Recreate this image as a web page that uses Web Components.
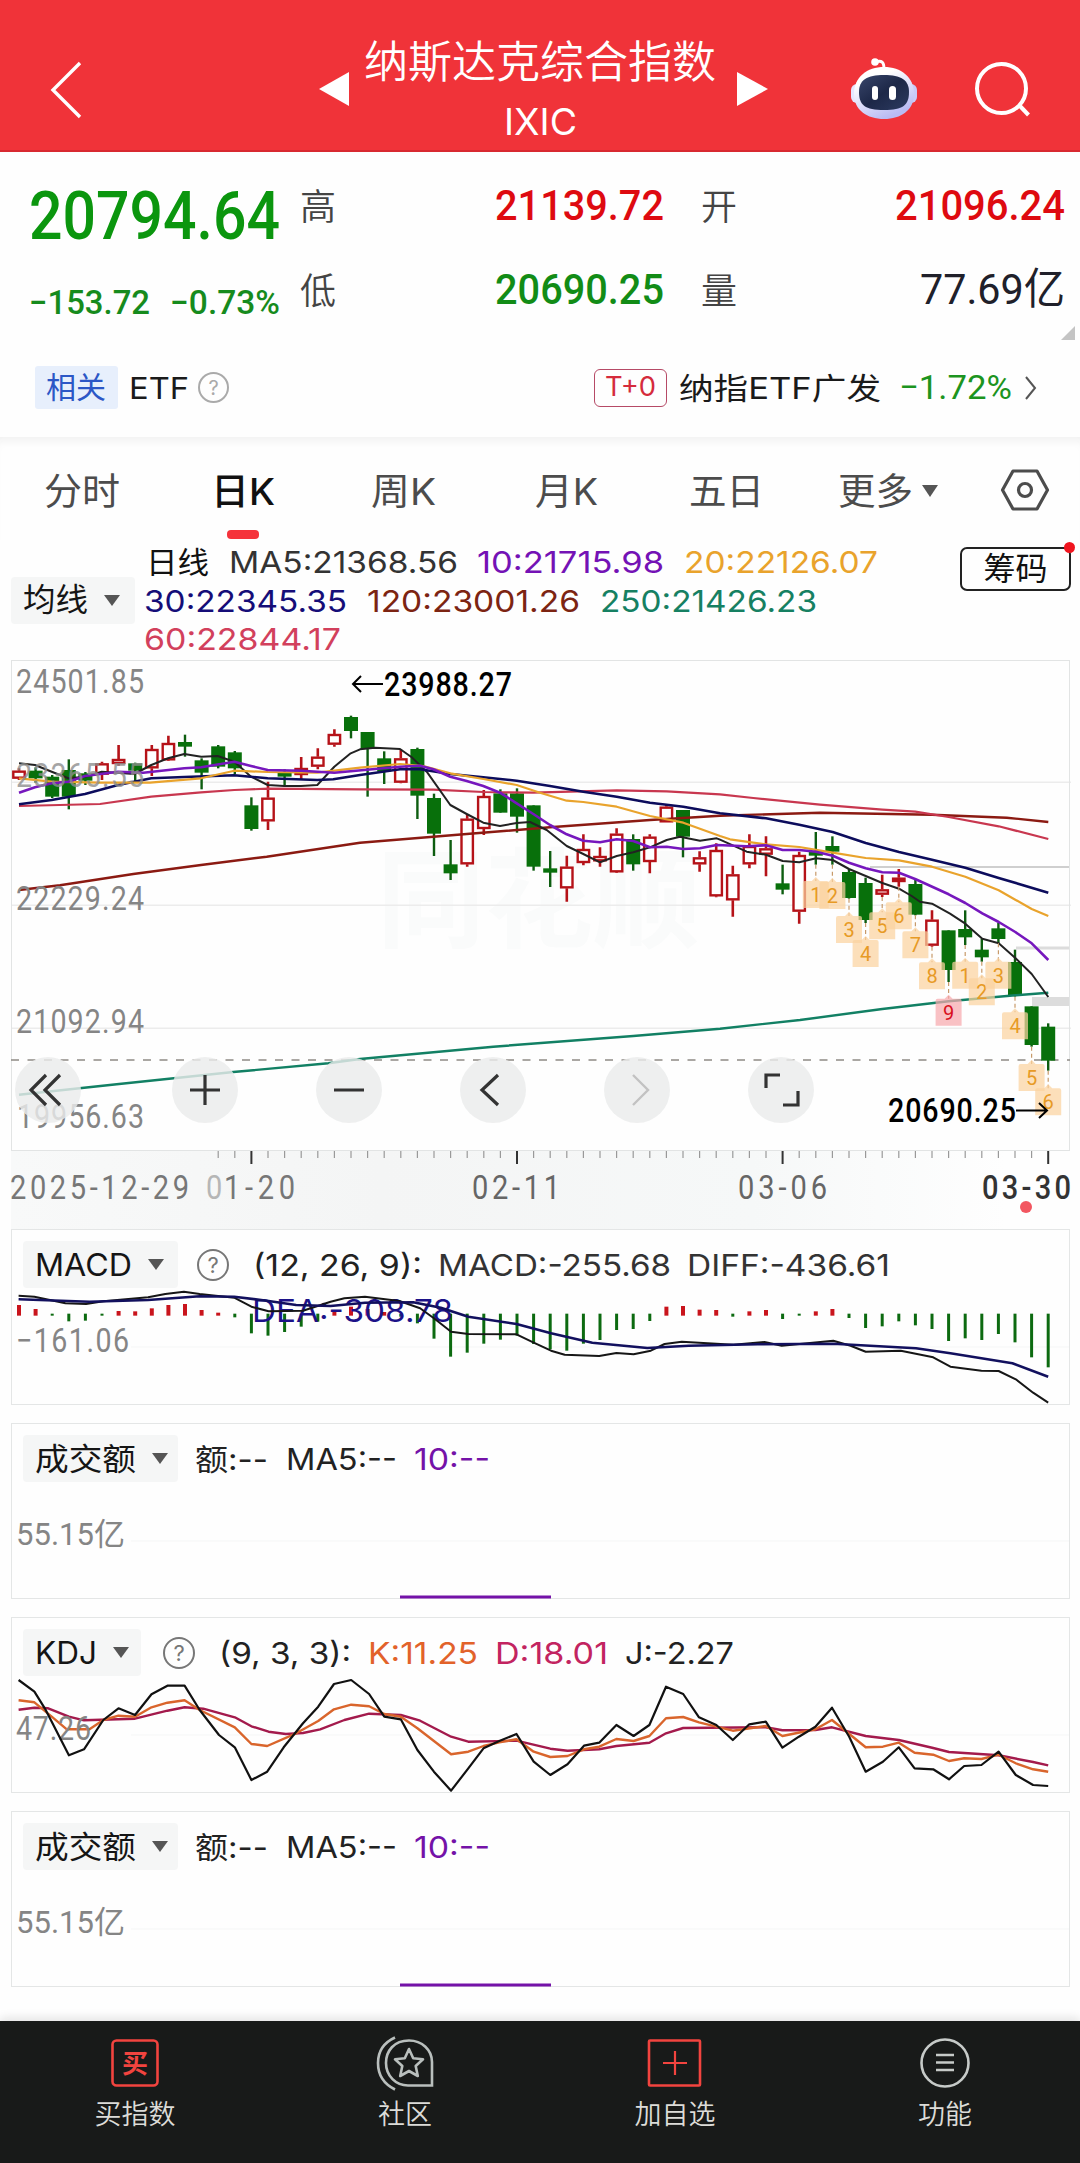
<!DOCTYPE html>
<html lang="zh-CN">
<head>
<meta charset="utf-8">
<title>纳斯达克综合指数</title>
<style>
    body {
        margin: 0;
        width: 1080px;
        height: 2163px;
        overflow: hidden;
        background: #fefefe;
        font-family: Inter, "Noto Sans CJK SC", sans-serif;
    }
</style>
</head>
<body>
<stock-page></stock-page>

<script>
const STEP = 16.6;
const FIRST_X = 8;
const FONT = 'Inter, "Noto Sans CJK SC", sans-serif';
const DIGITS = 'Roboto, "Noto Sans CJK SC", sans-serif';

// [up, high, bodyTop, bodyBottom, low] in thirds of a pixel
const CANDLES = [
    [1,355,362,386,390],[0,352,362,385,398],[0,375,380,440,444],[0,328,360,440,478],[0,366,370,392,405],
    [1,335,340,374,390],[1,285,327,342,347],[0,338,340,362,395],[1,285,297,355,378],[1,257,279,331,333],
    [0,254,276,290,320],[0,325,331,368,418],[0,285,289,350,355],[0,303,307,355,372],[0,442,466,537,542],
    [1,395,443,514,540],[0,358,368,380,405],[1,321,354,375,390],[1,295,320,350,358],[1,238,252,284,290],
    [0,197,201,243,265],[0,246,246,297,440],[0,304,325,365,402],[1,298,325,398,400],[0,293,297,437,507],
    [0,431,444,551,618],[0,570,643,670,690],[1,492,506,643,650],[1,420,438,537,555],[0,418,430,488,488],
    [0,415,430,500,548],[0,466,466,650,662],[0,603,655,668,711],[1,617,650,715,755],[1,553,597,639,646],
    [1,592,618,634,650],[1,535,551,667,669],[0,553,567,643,662],[1,553,560,636,670],[1,465,470,517,517],
    [0,480,480,560,622],[1,604,622,643,665],[1,580,600,739,742],[1,647,673,751,800],[1,553,588,643,655],
    [1,559,595,614,679],[0,644,700,719,733],[1,605,615,785,821],[0,546,605,617,644],[0,559,588,605,644],
    [0,657,666,744,746],[0,683,699,810,819],[1,674,718,734,741],[1,657,683,696,710],[0,690,702,794,796],
    [1,781,809,887,890],[0,841,841,960,996],[0,781,837,862,885],[0,866,899,922,935],[0,819,835,867,880],
    [0,899,936,1038,1040],[0,1069,1069,1185,1190],[0,1120,1130,1232,1262]
];

const AVERAGES = [
    ['#8b1a12', 2.4, '57,720 180,706 400,672 603,645 800,620 1000,590 1080,578 1400,552 1650,532 1950,510 2160,497 2460,488 2796,494 3020,503 3145,516'],
    ['#128064', 2.4, '57,1334 350,1303 700,1266 985,1240 1080,1227 1480,1190 1900,1158 2160,1136 2400,1110 2647,1077 2846,1054 3046,1036 3145,1028'],
    ['#c8374f', 2.2, '57,468 300,462 454,440 603,427 703,420 803,416 1080,418 1300,419 1450,426 1600,428 1850,421 2000,424 2160,433 2260,444 2460,464 2647,479 2746,485 2846,501 2996,529 3145,567'],
    ['#222', 2, '57,340 105,345 155,365 205,385 255,380 305,365 403,372 454,345 504,325 553,312 604,320 653,318 703,335 720,350 753,380 803,405 852,408 903,408 952,405 1003,350 1052,310 1080,298 1125,293 1200,297 1235,322 1280,365 1351,465 1400,492 1450,518 1500,528 1550,519 1590,516 1640,540 1700,588 1750,612 1800,637 1850,618 1900,607 1950,592 2000,570 2040,560 2100,572 2150,565 2160,569 2240,605 2298,614 2348,633 2398,637 2448,625 2498,630 2547,657 2597,678 2647,699 2697,716 2735,738 2760,755 2796,761 2850,791 2896,821 2947,866 2996,880 3046,924 3095,972 3145,1041'],
    ['#0c0c5c', 2.6, '57,463 155,450 255,432 354,405 454,385 553,381 703,376 803,385 952,390 1000,388 1080,375 1200,358 1260,358 1351,372 1450,382 1550,392 1650,408 1750,425 1850,440 1950,458 2050,470 2160,490 2298,505 2398,524 2498,546 2597,579 2697,606 2796,629 2896,653 2996,684 3145,728'],
    ['#e9a32c', 2.2, '57,385 155,395 300,398 450,398 603,385 703,362 803,366 952,368 1080,353 1200,342 1270,348 1351,370 1450,387 1550,405 1620,428 1700,452 1750,456 1850,470 1950,498 2050,518 2160,558 2190,568 2298,583 2398,591 2498,608 2597,624 2697,631 2796,650 2896,680 2996,721 3046,749 3095,777 3145,798'],
    ['#7617bd', 2.6, '57,428 105,412 155,400 205,395 255,378 354,365 430,368 553,355 604,352 703,335 753,348 803,360 903,362 1003,368 1125,357 1200,350 1260,347 1300,358 1351,380 1400,393 1450,408 1500,428 1550,460 1600,492 1650,525 1700,553 1750,572 1800,577 1850,568 1900,573 1950,592 2000,590 2050,597 2100,595 2150,585 2240,589 2298,586 2348,600 2398,600 2448,605 2498,617 2547,638 2597,655 2647,667 2697,668 2747,688 2846,733 2896,759 2947,790 2996,816 3046,846 3095,880 3145,930']
];

// sequence counters under the last candles: [text, bottom of the box]
const COUNTERS = [
    [1,774],[2,777],[3,879],[4,951],[5,868],[6,838],[7,925],[8,1018],[9,1127],
    [1,1016],[2,1066],[3,1016],[4,1168],[5,1323],[6,1396]
];

const MACD_BARS = [
    495,507,-527,-544,-542,-527,513,514,505,495,492,510,518,-532,-580,-587,-576,-560,-545,
    512,500,507,516,-530,-550,-596,-650,-638,-611,-599,-587,-612,-628,-632,-611,-600,-570,-567,-543,
    500,498,509,510,-530,514,510,-537,-527,514,507,-534,-564,-559,-544,-556,-567,-603,-595,-600,-582,
    -607,-652,-682
];
const DIFF = '27,467 50,470 95,490 125,492 150,484 215,472 240,462 267,455 290,462 340,473 365,500 390,514 440,512 480,485 500,475 530,470 580,483 610,505 630,535 655,575 680,582 750,583 775,608 800,632 820,644 870,648 895,639 920,643 945,632 965,612 990,605 1065,614 1110,606 1135,617 1210,602 1235,617 1257,635 1308,632 1355,652 1380,680 1425,692 1450,693 1475,718 1500,758 1522,788';
const DEA = '27,478 130,485 215,480 290,469 340,470 390,483 430,495 480,498 530,488 600,487 640,503 680,530 750,552 800,580 860,608 940,624 1000,617 1100,613 1210,611 1330,625 1380,640 1470,670 1522,710';

const LINE_J = '27,60 50,95 65,145 100,286 122,268 150,180 172,145 196,165 220,103 243,77 268,77 290,150 318,225 341,262 365,360 388,335 412,262 440,190 462,140 485,72 510,60 536,102 558,170 582,178 606,270 630,335 655,392 680,325 702,265 725,243 750,222 775,305 799,345 824,313 848,257 870,248 895,195 920,228 943,195 967,80 992,102 1015,172 1040,195 1064,240 1088,193 1112,185 1136,263 1160,230 1184,200 1208,143 1233,230 1257,335 1282,305 1305,262 1328,325 1355,328 1378,358 1400,318 1425,315 1450,275 1475,345 1500,375 1522,378';
const LINE_K = '27,121 50,127 75,170 97,208 130,208 150,180 172,167 196,170 220,142 243,128 268,121 290,150 341,202 365,252 388,258 430,220 462,183 485,148 510,134 536,139 558,162 582,170 606,205 655,283 680,275 702,258 725,247 750,238 775,275 799,291 824,288 848,268 870,260 895,237 920,243 943,228 967,175 992,171 1015,187 1064,212 1112,198 1136,228 1184,208 1208,180 1257,262 1282,260 1305,248 1328,278 1355,284 1378,303 1400,295 1425,297 1450,284 1475,310 1500,328 1522,335';
const LINE_D = '27,149 50,143 70,145 100,170 122,181 196,176 243,152 268,142 295,146 341,172 365,199 390,215 415,222 440,219 465,208 500,180 536,161 582,165 610,182 655,230 680,245 750,242 799,266 824,272 870,268 895,258 943,248 967,220 992,204 1112,202 1136,211 1184,210 1208,202 1257,228 1305,240 1355,264 1378,276 1450,286 1500,306 1522,316';

const slotX = i => FIRST_X + i * STEP;

function polyline(points, fx, fy, color, width) {
    const pts = points.split(' ').map(p => {
        const [x, y] = p.split(',').map(Number);
        return fx(x).toFixed(1) + ',' + fy(y).toFixed(1);
    }).join(' ');
    return `<polyline points="${pts}" fill="none" stroke="${color}" stroke-width="${width}" stroke-linejoin="round"/>`;
}

function label(x, y, width, text, color = '#858585', size = 32, weight = 400) {
    return `<text x="${x}" y="${y}" textLength="${width}" lengthAdjust="spacingAndGlyphs" fill="${color}" font-size="${size}" font-weight="${weight}">${text}</text>`;
}

// Narrow digits with open spacing, as on the price and date scales
function digits(x, y, width, text, color = '#858585', weight = 400, size = 32.5) {
    const k = .88;
    return `<text transform="translate(${x} ${y}) scale(${k} 1)" textLength="${(width + 1) / k}" fill="${color}" font-size="${size}" font-weight="${weight}">${text}</text>`;
}

class BaseElement extends HTMLElement {
    constructor() {
        super();
        this.attachShadow({mode: 'open'});
    }

    connectedCallback() {
        this.shadowRoot.innerHTML = this.render();
    }
}

// Text squeezed or stretched to a given width
class FitText extends BaseElement {
    connectedCallback() {
        super.connectedCallback();
        const span = this.shadowRoot.querySelector('span');
        const width = Number(this.getAttribute('w'));
        span.style.transform = `scaleX(${width / span.getBoundingClientRect().width})`;
    }

    render() {
        return `
        <style>
            :host { display: block; flex: none; width: ${this.getAttribute('w')}px; white-space: nowrap; line-height: 1.2; }
            span { display: inline-block; transform-origin: 0 50%; }
        </style>
        <span><slot></slot></span>`;
    }
}
customElements.define('fit-text', FitText);

class HelpMark extends BaseElement {
    render() {
        return `
        <style>
            :host {
                display: flex; flex: none; align-items: center; justify-content: center; box-sizing: border-box;
                width: 32px; height: 32px; border: 2px solid #777; border-radius: 50%;
                color: #777; font: 22px/1 ${FONT};
            }
        </style>
        <slot></slot>`;
    }
}
customElements.define('help-mark', HelpMark);

class DropTag extends BaseElement {
    render() {
        return `
        <style>
            :host {
                display: flex; flex: none; align-items: center; box-sizing: border-box; height: 47px;
                gap: 16px; padding: 0 0 0 12px; background: #f5f6f6; border-radius: 4px; color: #151515;
                font-size: 31px;
            }
            i { width: 0; border: 8px solid transparent; border-top: 11px solid #555; border-bottom: 0; }
        </style>
        <slot></slot><i></i>`;
    }
}
customElements.define('drop-tag', DropTag);

class PageHeader extends BaseElement {
    render() {
        return `
        <style>
            :host {
                display: flex; height: 152px; background: #f03339; color: #fff;
                box-shadow: inset 0 -2px #d82930;
            }
            svg { flex: none; display: block; }
            .title { width: 354px; margin-left: 14px; margin-right: 1px; padding-top: 33px; display: flex; flex-direction: column; align-items: center; }
            .name { font-size: 44px; font-weight: 350; line-height: 58px; white-space: nowrap; }
            .code { font-size: 37px; font-family: ${FONT}; margin-top: 9px; }
        </style>
        <svg width="349" height="152">
            <path d="M80 63L53 90L80 117" fill="none" stroke="#fff" stroke-width="3.4"/>
            <path d="M349 72V106L319 89Z" fill="#fff"/>
        </svg>
        <div class="title">
            <div class="name">纳斯达克综合指数</div>
            <fit-text class="code" w="73">IXIC</fit-text>
        </div>
        <svg width="362" height="152" viewBox="718 0 362 152">
            <defs>
                <linearGradient id="shell" x1="0" y1="0" x2=".5" y2="1">
                    <stop offset=".3" stop-color="#fff"/><stop offset="1" stop-color="#b9bbf4"/>
                </linearGradient>
                <linearGradient id="visor" x1="0" y1="0" x2="1" y2="1">
                    <stop offset="0" stop-color="#39466b"/><stop offset=".5" stop-color="#1d2848"/><stop offset="1" stop-color="#2c3a60"/>
                </linearGradient>
            </defs>
            <path d="M737 72V106L768 89Z" fill="#fff"/>
            <path d="M875 62C882 60 884 62 884 69" fill="none" stroke="#fff" stroke-width="3"/>
            <circle cx="875" cy="62" r="3.8" fill="#fff"/>
            <rect x="851" y="84" width="12" height="19" rx="6" fill="#e6e7ff"/>
            <rect x="905" y="84" width="12" height="19" rx="6" fill="#c9cbf8"/>
            <path d="M884 67C901 67 914 77 914 94C914 110 901 119 884 119C867 119 854 110 854 94C854 77 867 67 884 67Z" fill="url(#shell)"/>
            <path d="M884 75C901 75 909 80 909 92C909 105 903 110 884 110C865 110 859 105 859 92C859 80 867 75 884 75Z" fill="url(#visor)"/>
            <rect x="872" y="86" width="6" height="14" rx="3" fill="#fff"/>
            <rect x="889" y="86" width="7" height="14" rx="3.5" fill="#fff"/>
            <circle cx="1001.5" cy="88.5" r="24.5" fill="none" stroke="#fff" stroke-width="4"/>
            <path d="M1019 105L1028.500 115" stroke="#fff" stroke-width="4"/>
        </svg>`;
    }
}
customElements.define('page-header', PageHeader);

class QuoteBoard extends BaseElement {
    render() {
        return `
        <style>
            :host { display: block; position: relative; height: 198px; font-family: ${DIGITS}; }
            .board { display: flex; padding: 0 15px 0 29px; }
            .now { width: 251px; color: #0b960e; }
            .last { font-size: 66px; font-weight: 500; margin-top: 25px; }
            .change { display: flex; gap: 20px; font-size: 33px; margin-top: 27px; font-weight: 500; color: #168b1d; }
            .pair { display: flex; flex-direction: column; gap: 32px; padding-top: 28px; font-weight: 500; font-size: 43px; }
            .pair div { display: flex; height: 52px; align-items: center; justify-content: space-between; }
            .hl { width: 364px; margin-left: 20px; }
            .ov { width: 364px; margin-left: 37px; }
            b { font: 350 36px/1 "Noto Sans CJK SC", sans-serif; color: #444; margin-top: -4px; }
            .up { color: #de0a10; }
            .down { color: #128c16; }
            .vol { color: #20202a; font-weight: 400; }
            .corner { position: absolute; right: 5px; bottom: 10px; border: 7px solid transparent; border-right-color: #c4c4c4; border-bottom-color: #c4c4c4; }
        </style>
        <div class="board">
            <div class="now">
                <fit-text class="last" w="251">20794.64</fit-text>
                <div class="change"><fit-text w="121">−153.72</fit-text><fit-text w="110">−0.73%</fit-text></div>
            </div>
            <div class="pair hl">
                <div><b>高</b><fit-text class="up" w="169">21139.72</fit-text></div>
                <div><b>低</b><fit-text class="down" w="169">20690.25</fit-text></div>
            </div>
            <div class="pair ov">
                <div><b>开</b><fit-text class="up" w="170">21096.24</fit-text></div>
                <div><b>量</b><fit-text class="vol" w="145">77.69亿</fit-text></div>
            </div>
        </div>
        <div class="corner"></div>`;
    }
}
customElements.define('quote-board', QuoteBoard);

class RelatedEtf extends BaseElement {
    render() {
        return `
        <style>
            :host {
                display: flex; align-items: center; height: 75px; padding: 0 43px 0 35px; font-size: 30px; color: #1a1a1a;
            }
            .tag { box-sizing: border-box; width: 83px; height: 43px; padding-left: 11px; line-height: 42px; background: #e7effc; color: #2c57c6; border-radius: 3px; margin-right: 11px; }
            .etf { margin-right: 9px; }
            help-mark { width: 31px; height: 31px; border-color: #aaa; color: #aaa; font-size: 20px; }
            .t0 { display: flex; box-sizing: border-box; height: 38px; width: 73px; align-items: center; justify-content: center; margin: 0 12px 0 auto; border: 1.5px solid #b64a66; border-radius: 6px; color: #d52b3c; font-size: 27px; }
            .drop { margin-left: 18px; color: #1c9420; font-family: ${DIGITS}; font-size: 34px; }
            svg { margin-left: 12px; }
        </style>
        <div class="tag">相关</div>
        <fit-text class="etf" w="60">ETF</fit-text>
        <help-mark>?</help-mark>
        <div class="t0"><fit-text w="51">T+0</fit-text></div>
        <fit-text w="202">纳指ETF广发</fit-text>
        <fit-text class="drop" w="113">−1.72%</fit-text>
        <svg width="13" height="24"><path d="M2 1L11 12L2 23" fill="none" stroke="#555" stroke-width="2"/></svg>`;
    }
}
customElements.define('related-etf', RelatedEtf);

class PeriodTabs extends BaseElement {
    render() {
        return `
        <style>
            :host { display: flex; height: 103px; padding: 0 30px 0 44px; font-size: 37px; color: #4c4c4c; box-shadow: inset 0 9px 9px -5px #f1f1f1; }
            div { display: flex; height: 103px; box-sizing: border-box; padding-top: 33px; line-height: 52px; }
            .on { margin: 0 96px 0 91px; color: #111; font-weight: 500; flex-direction: column; align-items: center; }
            .on i { width: 32px; height: 9px; border-radius: 4px; background: #f5333b; margin-top: 16px; flex: none; }
            .month { margin: 0 91px 0 99px; }
            .more { margin-left: 74px; }
            .more i { width: 0; height: 0; margin: 15px 0 0 9px; border: 8px solid transparent; border-top: 12px solid #555; border-bottom: 0; }
            .setup { margin-left: auto; padding-top: 27px; }
        </style>
        <div><fit-text w="76">分时</fit-text></div>
        <div class="on"><fit-text w="64">日K</fit-text><i></i></div>
        <div><fit-text w="65">周K</fit-text></div>
        <div class="month"><fit-text w="63">月K</fit-text></div>
        <div><fit-text w="75">五日</fit-text></div>
        <div class="more"><fit-text w="75">更多</fit-text><i></i></div>
        <div class="setup"><svg width="50" height="52" viewBox="0 0 50 52">
            <path d="M13 7H37L47.500 26L37 45H13L2.500 26Z" fill="none" stroke="#4c4c4c" stroke-width="3.200" stroke-linejoin="round"/>
            <circle cx="25" cy="26" r="6.500" fill="none" stroke="#4c4c4c" stroke-width="3.200"/>
        </svg></div>`;
    }
}
customElements.define('period-tabs', PeriodTabs);

class AverageLegend extends BaseElement {
    render() {
        return `
        <style>
            :host { display: flex; height: 117px; padding: 0 9px 0 11px; font-size: 30px; }
            drop-tag { width: 124px; margin: 34px 9px 0 0; padding-left: 12px; font-size: 32px; }
            .lines { flex: 1; }
            .lines div { display: flex; gap: 20px; height: 38.6px; align-items: center; }
            .lines .first { padding-left: 2px; }
            .chip { position: relative; box-sizing: border-box; width: 111px; height: 44px; margin-top: 4px; border: 2px solid #222; border-radius: 7px; font-size: 32px; line-height: 39px; text-align: center; color: #111; }
            .chip i { position: absolute; right: -6px; top: -7px; width: 11px; height: 11px; border-radius: 50%; background: #f0141e; }
        </style>
        <drop-tag><fit-text w="65">均线</fit-text></drop-tag>
        <div class="lines">
            <div class="first"><fit-text w="63" style="color:#111">日线</fit-text><fit-text w="229" style="color:#333">MA5:21368.56</fit-text><fit-text w="187" style="color:#7412b5;margin-left:-1px">10:21715.98</fit-text><fit-text w="194" style="color:#e9a32c">20:22126.07</fit-text></div>
            <div><fit-text w="203" style="color:#150d78">30:22345.35</fit-text><fit-text w="213" style="color:#7c2412">120:23001.26</fit-text><fit-text w="217" style="color:#168062">250:21426.23</fit-text></div>
            <div><fit-text w="197" style="color:#d2405c">60:22844.17</fit-text></div>
        </div>
        <div class="chip">筹码<i></i></div>`;
    }
}
customElements.define('average-legend', AverageLegend);

class CandleChart extends BaseElement {
    fx = x => x / 3 - 11;
    fy = y => (y - 30) / 3;

    candle([up, high, top, bottom, low], i) {
        const x = slotX(i);
        const [h, t, b, l] = [high, top, bottom, low].map(this.fy);
        if (up) {
            return `<path d="M${x} ${h}V${t}M${x} ${b}V${l}" stroke="#b51218" stroke-width="2.600"/>
                <rect x="${x - 5.7}" y="${t + 1}" width="11.400" height="${Math.max(b - t - 2, 2)}" fill="#fff" stroke="#b51218" stroke-width="2.400"/>`;
        }
        return `<path d="M${x} ${h}V${l}" stroke="#0d5d10" stroke-width="2.400"/>
            <rect x="${x - 7}" y="${t}" width="14" height="${b - t}" fill="#08700b"/>`;
    }

    counter([n, bottom], k) {
        const i = 48 + k;
        const x = slotX(i);
        const y = this.fy(bottom) - 27;
        const hot = n === 9;
        return `<path d="M${x} ${this.fy(CANDLES[i][4])}V${y}" stroke="#c79a6a" stroke-width="1.200" stroke-dasharray="4 3"/>
            <path d="M${x - 13} ${y + 2}Q${x - 13} ${y} ${x - 11} ${y}H${x - 4}L${x} ${y - 4}L${x + 4} ${y}H${x + 11}Q${x + 13} ${y} ${x + 13} ${y + 2}V${y + 27}H${x - 13}Z" fill="${hot ? '#f7a9ad' : '#fbd3a0'}" fill-opacity=".72"/>
            <text x="${x}" y="${y + 21}" text-anchor="middle" font-size="20" fill="${hot ? '#d81020' : '#e79a25'}">${n}</text>`;
    }

    render() {
        const {fx, fy} = this;
        const grid = [397, 766, 1135].map(y => `<path d="M0 ${fy(y)}H1060" stroke="#ececec" stroke-width="1.500"/>`).join('');
        return `
        <style>
            :host { display: block; position: relative; height: 490px; margin: 0 10px 0 11px; }
            svg { display: block; font-family: ${DIGITS}; }
            .tools { position: absolute; left: 4px; top: 397px; display: flex; gap: 78px; }
            .tools svg { width: 66px; height: 66px; border-radius: 50%; background: rgba(234, 235, 235, .82); }
            .tools svg:first-child { margin-right: 13px; }
            .tools path { fill: none; stroke: #333; stroke-width: 3.2; }
        </style>
        <svg width="1060" height="491">
            <text x="366" y="279" font-size="108" font-weight="700" fill="#fafbfb" textLength="324">同花顺</text>
            ${grid}
            <path d="M859 207H1059" stroke="#cfcfcf" stroke-width="2"/>
            <path d="M1005 288H1059" stroke="#dcdcdc" stroke-width="3"/>
            <rect x="1021" y="337" width="38" height="9" fill="#dcdcdc"/>
            <rect x=".5" y=".5" width="1058" height="490" fill="none" stroke="#e2e4e4"/>
            <path d="M0 400H1059" stroke="#8f8a85" stroke-width="1.500" stroke-dasharray="8 8.500"/>
            ${CANDLES.map((c, i) => this.candle(c, i)).join('')}
            ${AVERAGES.map(([color, width, pts]) => polyline(pts, fx, fy, color, width)).join('')}
            ${COUNTERS.map((c, k) => this.counter(c, k)).join('')}
            ${digits(5, 32.5, 127, '24501.85')}
            <g opacity=".8">${digits(5, 127, 127, '23365.55', '#8e8e8e')}</g>
            ${digits(5, 249.5, 127, '22229.24')}
            ${digits(5, 372.5, 127, '21092.94')}
            ${digits(6, 467.5, 126, '19956.63')}
            ${digits(373, 35.5, 127, '23988.27', '#000', 500)}
            <path d="M372 24H342M350 16L342 24L350 32" fill="none" stroke="#000" stroke-width="2"/>
            ${digits(877, 461.5, 127, '20690.25', '#000', 500)}
            <path d="M1005 450.500H1036M1028 443L1036 450.500L1028 458" fill="none" stroke="#000" stroke-width="2"/>
        </svg>
        <div class="tools">
            <svg><path d="M31 18L16 33L31 48M45 18L30 33L45 48"/></svg>
            <svg><path d="M33 18V48M18 33H48"/></svg>
            <svg><path d="M18 33H48"/></svg>
            <svg><path d="M38 18L22 33L38 48"/></svg>
            <svg><path d="M29 18L44 33L29 48" style="stroke:#c2c2c2;stroke-width:2.4"/></svg>
            <svg><path d="M18 31V18H32M50 34V48H35"/></svg>
        </div>`;
    }
}
customElements.define('candle-chart', CandleChart);

class DateAxis extends BaseElement {
    render() {
        let ticks = '';
        for (let i = 12; i < 63; i++) {
            const major = i % 16 === 14;
            ticks += `<path d="M${slotX(i)} 1V${major ? 14 : 8}" stroke="${major ? '#333' : '#999'}" stroke-width="${major ? 2 : 1.2}"/>`;
        }
        return `
        <style>
            :host { display: block; height: 79px; margin: 0 10px 0 11px; background: linear-gradient(90deg, #f8f9f9, #f4f5f5 35%, #f6f8f8 70%, #fefefe 94%); }
            svg { display: block; overflow: visible; font-family: ${DIGITS}; }
        </style>
        <svg width="1059" height="78">
            ${ticks}
            ${digits(-1, 49, 178, '2025-12-29', '#777', 400, 33)}
            <g opacity=".5">${digits(195, 49, 17, '0', '#777', 400, 33)}</g>
            ${digits(213, 49, 70, '1-20', '#777', 400, 33)}
            ${digits(461, 49, 87, '02-11', '#666', 400, 33)}
            ${digits(727, 49, 88, '03-06', '#666', 400, 33)}
            ${digits(971, 49, 88, '03-30', '#333', 500, 33)}
            <circle cx="1015" cy="57" r="6" fill="#f25660"/>
        </svg>`;
    }
}
customElements.define('date-axis', DateAxis);

// Indicator frame: header row in slots, plot in the background
class IndicatorPanel extends BaseElement {
    render() {
        return `
        <style>
            :host { display: grid; box-sizing: border-box; height: 176px; margin: 0 10px 18px 11px; border: 1px solid #e4e6e6; font-size: 30px; color: #222; }
            header, .plot { grid-area: 1 / 1; }
            header { display: flex; align-items: center; height: 47px; margin: 11px 0 0 11px; }
        </style>
        <div class="plot"><slot name="plot"></slot></div>
        <header><slot></slot></header>`;
    }
}
customElements.define('indicator-panel', IndicatorPanel);

class PlotArea extends BaseElement {
    render() {
        return `
        <style>
            :host { display: block; }
            svg { display: block; margin: -1px; overflow: visible; font-family: ${DIGITS}; }
        </style>
        <svg width="1059" height="176">
            <path d="M120 118H1058" stroke="#f5f6f6"/>
            ${this.draw()}
        </svg>`;
    }
}

class MacdPlot extends PlotArea {
    draw() {
        const fx = x => x / 1.452 - 11;
        const fy = y => (y - 267) / 3;
        const bars = MACD_BARS.map((v, i) => {
            const up = v > 0;
            const [a, b] = up ? [fy(v), fy(527)] : [fy(521), fy(-v)];
            return `<path d="M${slotX(i)} ${a}V${b}" stroke="${up ? '#c9141c' : '#0c6a10'}" stroke-width="${up ? 4 : 3}"/>`;
        }).join('');
        return bars
            + label(241, 93, 201, 'DEA:-308.78', '#1c1288', 31).replace('<text', `<text font-family='${FONT}'`)
            + polyline(DIFF, fx, fy, '#161616', 2)
            + polyline(DEA, fx, fy, '#12105e', 2.6)
            + digits(5, 122.5, 112, '−161.06');
    }
}
customElements.define('macd-plot', MacdPlot);

class KdjPlot extends PlotArea {
    draw() {
        const fx = x => x / 1.452 - 11;
        const fy = y => y / 3 + 43;
        return polyline(LINE_D, fx, fy, '#a31a4c', 2.4)
            + polyline(LINE_K, fx, fy, '#d9652c', 2.4)
            + digits(5, 122.5, 74, '47.26')
            + polyline(LINE_J, fx, fy, '#111', 2.2);
    }
}
customElements.define('kdj-plot', KdjPlot);

class TurnoverPlot extends PlotArea {
    draw() {
        return label(5, 122, 109, '55.15亿', '#858585', 31)
            + '<path d="M389 174H540" stroke="#7412a8" stroke-width="3"/>';
    }
}
customElements.define('turnover-plot', TurnoverPlot);

class BottomNav extends BaseElement {
    render() {
        return `
        <style>
            :host { display: flex; height: 142px; background: #181a19; color: #dcdcd8; font-size: 27px; box-shadow: 0 -3px 9px #e2e2e2; position: relative; }
            div { flex: 1; display: flex; flex-direction: column; align-items: center; padding-top: 13px; line-height: 34px; }
            svg { width: 60px; height: 60px; margin-bottom: 4px; fill: none; stroke-width: 2.6; }
            span { font-weight: 350; }
        </style>
        <div>
            <svg stroke="#f2443f"><rect x="7.500" y="6.500" width="45" height="45" rx="4"/><text x="30" y="38.500" text-anchor="middle" font-size="26" font-weight="700" fill="#f2443f" stroke="none">买</text></svg>
            <span>买指数</span>
        </div>
        <div>
            <svg stroke="#b9bfbd">
                <path d="M34 6.500C19 6.500 11 17 11 29C11 42 21 51.500 33 51.500H57V28C57 16 47 6.500 34 6.500Z"/>
                <path d="M20 3.500C8 9 3 18 3 29C3 41 9 50 20 55.500"/>
                <path d="M34 15L38.200 24.200L48 25.300L40.700 32L42.800 42L34 37L25.200 42L27.300 32L20 25.300L29.800 24.200Z" stroke-linejoin="round"/>
            </svg>
            <span>社区</span>
        </div>
        <div>
            <svg stroke="#f2443f"><rect x="4" y="6.500" width="51" height="45" rx="1"/><path d="M30 17V41M18 29H42" stroke-width="2.200"/></svg>
            <span>加自选</span>
        </div>
        <div>
            <svg stroke="#c6cac8"><circle cx="30" cy="29" r="23.500"/><path d="M21 21H39M21 28.500H39M21 36H39"/></svg>
            <span>功能</span>
        </div>`;
    }
}
customElements.define('bottom-nav', BottomNav);

class StockPage extends BaseElement {
    turnover() {
        return `
        <indicator-panel>
            <turnover-plot slot="plot"></turnover-plot>
            <drop-tag style="width:155px"><fit-text w="101">成交额</fit-text></drop-tag>
            <fit-text w="73" style="margin-left:17px">额:--</fit-text>
            <fit-text w="111" style="margin-left:18px">MA5:--</fit-text>
            <fit-text w="76" style="margin-left:17px;color:#7412a8">10:--</fit-text>
        </indicator-panel>`;
    }

    render() {
        return `
        <style>
            :host { display: flex; flex-direction: column; height: 2163px; }
            bottom-nav { margin-top: auto; }
        </style>
        <page-header></page-header>
        <quote-board></quote-board>
        <related-etf></related-etf>
        <div style="height:12px"></div>
        <period-tabs></period-tabs>
        <div style="height:3px"></div>
        <average-legend></average-legend>
        <candle-chart></candle-chart>
        <date-axis></date-axis>
        <indicator-panel>
            <macd-plot slot="plot"></macd-plot>
            <drop-tag style="width:155px"><fit-text w="97">MACD</fit-text></drop-tag>
            <help-mark style="margin-left:19px">?</help-mark>
            <fit-text w="169" style="margin-left:24px">(12, 26, 9):</fit-text>
            <fit-text w="233" style="margin-left:16px;color:#333">MACD:-255.68</fit-text>
            <fit-text w="203" style="margin-left:16px;color:#333">DIFF:-436.61</fit-text>
        </indicator-panel>
        ${this.turnover()}
        <indicator-panel>
            <kdj-plot slot="plot"></kdj-plot>
            <drop-tag style="width:118px"><fit-text w="62">KDJ</fit-text></drop-tag>
            <help-mark style="margin-left:22px">?</help-mark>
            <fit-text w="132" style="margin-left:24px">(9, 3, 3):</fit-text>
            <fit-text w="110" style="margin-left:17px;color:#e2622a">K:11.25</fit-text>
            <fit-text w="113" style="margin-left:17px;color:#c22460">D:18.01</fit-text>
            <fit-text w="109" style="margin-left:17px">J:-2.27</fit-text>
        </indicator-panel>
        ${this.turnover()}
        <bottom-nav></bottom-nav>`;
    }
}
customElements.define('stock-page', StockPage);
</script>
</body>
</html>
